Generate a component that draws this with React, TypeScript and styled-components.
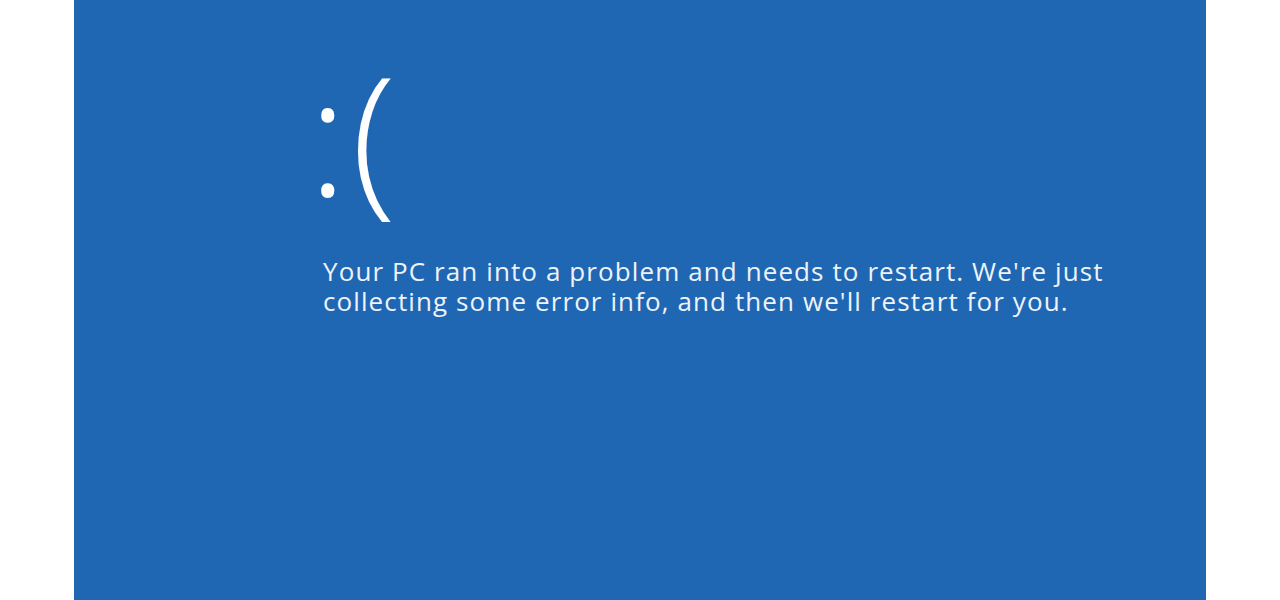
import React from "react";
import styled, { createGlobalStyle } from "styled-components";

const Global = createGlobalStyle`
  html, body { margin: 0; padding: 0; background: #ffffff; }
  #root { width: 1280px; height: 600px; }
`;

const Page = styled.div`
  display: flex;
  width: 1280px;
  height: 600px;
  background: #ffffff;
`;

const Screen = styled.div`
  width: 1132px;
  height: 600px;
  margin-left: 74px;
  background: #2067b3;
  box-sizing: border-box;
  padding: 33px 0 0 249px;
  display: flex;
  flex-direction: column;
  color: #eef3fa;
`;

const Face = styled.div`
  margin-left: -15px;
  font-family: "Open Sans", "Noto Sans", sans-serif;
  font-weight: 300;
  font-size: 165px;
  line-height: 198px;
  height: 198px;
  letter-spacing: 4px;
  color: #ffffff;
`;

const Message = styled.p`
  margin: 25px 0 0 0;
  font-family: "Open Sans", "Noto Sans", sans-serif;
  font-size: 26px;
  line-height: 30px;
  letter-spacing: 1.1px;
  width: 880px;
`;

export default function App() {
  return (
    <>
      <Global />
      <Page>
        <Screen>
          <Face>:(</Face>
          <Message>
            Your PC ran into a problem and needs to restart. We're just
            <br />
            collecting some error info, and then we'll restart for you.
          </Message>
        </Screen>
      </Page>
    </>
  );
}
